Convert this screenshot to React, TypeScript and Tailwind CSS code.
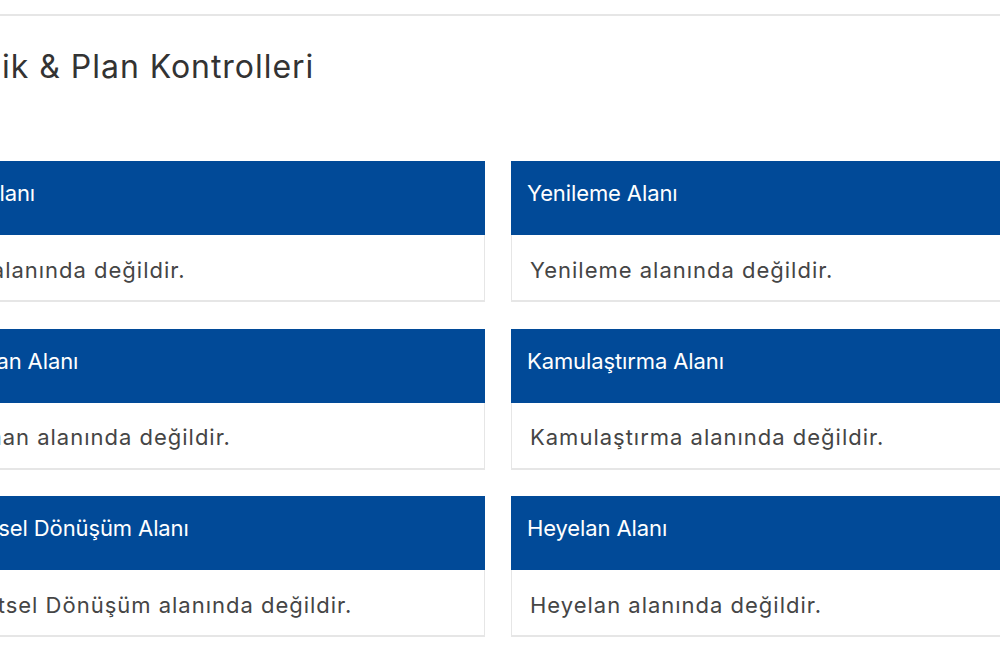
import React from "react";

const cards: { title: string; body: string }[] = [
  { title: "Sit Alanı", body: "Sit alanında değildir." },
  { title: "Yenileme Alanı", body: "Yenileme alanında değildir." },
  { title: "Orman Alanı", body: "Orman alanında değildir." },
  { title: "Kamulaştırma Alanı", body: "Kamulaştırma alanında değildir." },
  { title: "Kentsel Dönüşüm Alanı", body: "Kentsel Dönüşüm alanında değildir." },
  { title: "Heyelan Alanı", body: "Heyelan alanında değildir." },
];

function Card({ title, body }: { title: string; body: string }) {
  return (
    <div className="flex flex-col">
      <div className="h-[74px] bg-[#014a98] flex items-start pt-[16px] pl-4 leading-[33px] text-white text-[22px] tracking-[-0.005em] whitespace-nowrap">
        {title}
      </div>
      <div className="h-[67px] border border-t-0 border-b-2 border-[#e6e6e6] bg-white flex items-center pt-[5px] pl-[18px] text-[22px] text-[#454545] tracking-[0.045em] whitespace-nowrap">
        {body}
      </div>
    </div>
  );
}

export default function App() {
  return (
    <div
      className="w-[1000px] h-[664px] overflow-hidden bg-white"
      style={{ fontFamily: "Inter, 'Noto Sans', sans-serif" }}
    >
      <div className="h-[14px]" />
      <div className="h-[2px] bg-[#e6e6e6]" />
      <div className="ml-[-64px] w-[1128px]">
        <h2 className="mt-[31px] ml-[-11px] leading-[40px] text-[32px] text-[#333] tracking-[0.03em] whitespace-nowrap">
          Teknik &amp; Plan Kontrolleri
        </h2>
        <div className="mt-[74px] grid grid-cols-[549px_553px] gap-x-[26px] gap-y-[26.5px]">
          {cards.map((c) => (
            <Card key={c.title} title={c.title} body={c.body} />
          ))}
        </div>
      </div>
    </div>
  );
}
